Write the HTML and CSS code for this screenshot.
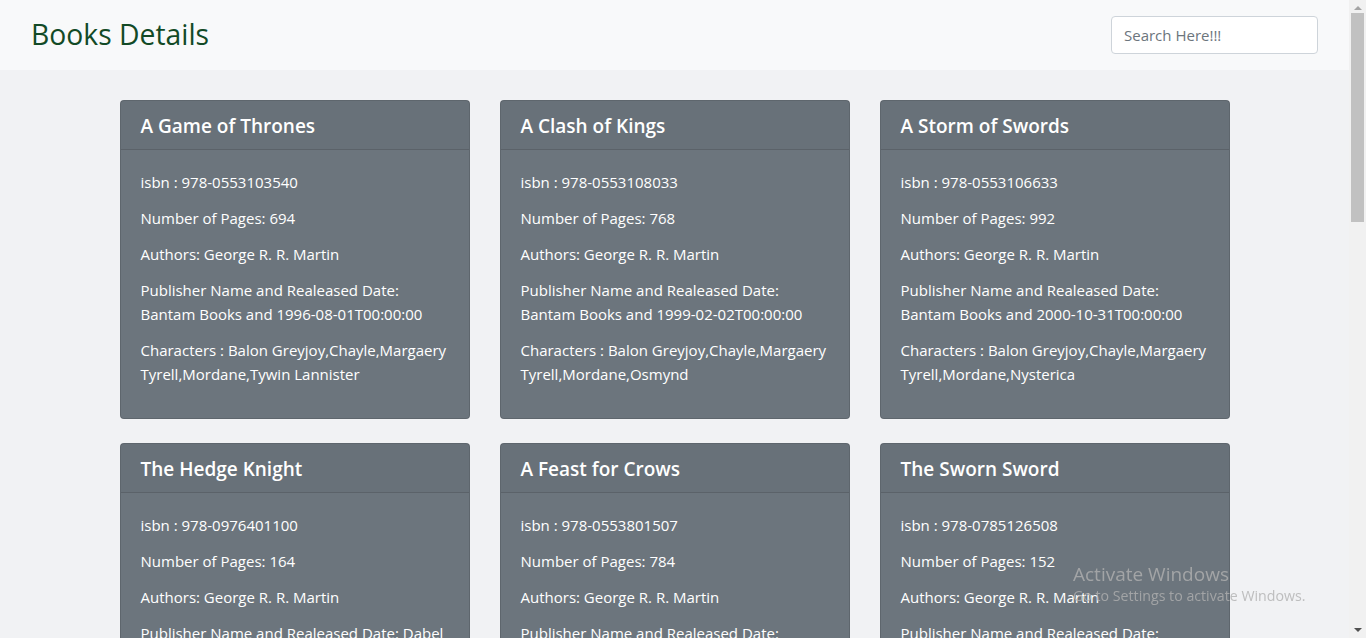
FILE: index.html
```html
<!DOCTYPE html>
<html lang="en">
<head>
<meta charset="utf-8">
<title>Books Details</title>
<link rel="stylesheet" href="styles.css">
</head>
<body>
<div class="app">
  <div class="page">
    <nav class="navbar">
      <h1 class="brand">Books Details</h1>
      <input class="search" type="text" placeholder="Search Here!!!">
    </nav>
    <main class="grid">
      <div class="card">
        <div class="card-header"><h5 class="card-title">A Game of Thrones</h5></div>
        <div class="card-body">
          <p>isbn : 978-0553103540</p>
          <p>Number of Pages: 694</p>
          <p>Authors: George R. R. Martin</p>
          <p>Publisher Name and Realeased Date: Bantam Books and 1996-08-01T00:00:00</p>
          <p>Characters : Balon Greyjoy,Chayle,Margaery Tyrell,Mordane,Tywin Lannister</p>
        </div>
      </div>
      <div class="card">
        <div class="card-header"><h5 class="card-title">A Clash of Kings</h5></div>
        <div class="card-body">
          <p>isbn : 978-0553108033</p>
          <p>Number of Pages: 768</p>
          <p>Authors: George R. R. Martin</p>
          <p>Publisher Name and Realeased Date: Bantam Books and 1999-02-02T00:00:00</p>
          <p>Characters : Balon Greyjoy,Chayle,Margaery Tyrell,Mordane,Osmynd</p>
        </div>
      </div>
      <div class="card">
        <div class="card-header"><h5 class="card-title">A Storm of Swords</h5></div>
        <div class="card-body">
          <p>isbn : 978-0553106633</p>
          <p>Number of Pages: 992</p>
          <p>Authors: George R. R. Martin</p>
          <p>Publisher Name and Realeased Date: Bantam Books and 2000-10-31T00:00:00</p>
          <p>Characters : Balon Greyjoy,Chayle,Margaery Tyrell,Mordane,Nysterica</p>
        </div>
      </div>
      <div class="card">
        <div class="card-header"><h5 class="card-title">The Hedge Knight</h5></div>
        <div class="card-body">
          <p>isbn : 978-0976401100</p>
          <p>Number of Pages: 164</p>
          <p>Authors: George R. R. Martin</p>
          <p>Publisher Name and Realeased Date: Dabel Brothers Publishing and 2005-10-03T00:00:00</p>
          <p>Characters : Aegon I Targaryen,Aerion Targaryen,Bennis,Duncan the Tall</p>
        </div>
      </div>
      <div class="card">
        <div class="card-header"><h5 class="card-title">A Feast for Crows</h5></div>
        <div class="card-body">
          <p>isbn : 978-0553801507</p>
          <p>Number of Pages: 784</p>
          <p>Authors: George R. R. Martin</p>
          <p>Publisher Name and Realeased Date: Bantam Books and 2005-11-08T00:00:00</p>
          <p>Characters : Aemon Targaryen,Alayaya,Alleras,Arya Stark</p>
        </div>
      </div>
      <div class="card">
        <div class="card-header"><h5 class="card-title">The Sworn Sword</h5></div>
        <div class="card-body">
          <p>isbn : 978-0785126508</p>
          <p>Number of Pages: 152</p>
          <p>Authors: George R. R. Martin</p>
          <p>Publisher Name and Realeased Date: Marvel and 2008-06-18T00:00:00</p>
          <p>Characters : Aegon Targaryen,Bennis,Duncan the Tall,Egg</p>
        </div>
      </div>
    </main>
  </div>
  <div class="scrollbar">
    <span class="arrow arrow-up"></span>
    <div class="thumb"></div>
    <div class="track"></div>
    <span class="arrow arrow-down"></span>
  </div>
</div>
<div class="watermark">
  <div class="wm-title">Activate Windows</div>
  <div class="wm-sub">Go to Settings to activate Windows.</div>
</div>
</body>
</html>
```

FILE: styles.css
```css
* { box-sizing: border-box; }

html, body {
  margin: 0;
  height: 100%;
  overflow: hidden;
}

body {
  font-family: "Open Sans", "Noto Sans", sans-serif;
  font-size: 15px;
  line-height: 24px;
  color: #212529;
  background: #f1f2f4;
}

.app {
  display: flex;
  height: 100vh;
}

.page {
  flex: 1;
  min-width: 0;
  overflow: hidden;
}

.navbar {
  height: 70px;
  background: #f8f9fa;
  display: flex;
  align-items: center;
  justify-content: space-between;
  padding: 0 31px;
}

.brand {
  margin: 0;
  font-size: 28.3px;
  font-weight: 400;
  line-height: 1.2;
  color: #124a26;
}

.search {
  width: 207px;
  height: 38px;
  padding: 6px 12px;
  border: 1px solid #ced4da;
  border-radius: 4px;
  background: #fff;
  font-family: inherit;
  font-size: 15px;
  color: #495057;
  outline: none;
}

.search::placeholder {
  color: #6c757d;
}

.grid {
  width: 1110px;
  margin: 30px auto 0;
  display: grid;
  grid-template-columns: repeat(3, 350px);
  column-gap: 30px;
  row-gap: 24px;
  align-items: start;
}

.card {
  background: #6c757d;
  border: 1px solid rgba(0, 0, 0, 0.125);
  border-radius: 4px;
  color: #fff;
}

.card-header {
  padding: 13px 20px 11px;
  border-bottom: 1px solid rgba(0, 0, 0, 0.125);
  background: rgba(0, 0, 0, 0.03);
}

.card-title {
  margin: 0;
  font-size: 19px;
  font-weight: 600;
  line-height: 24px;
}

.card-body {
  padding: 20px;
}

.card-body p {
  margin: 0 0 12px;
}

.scrollbar {
  width: 17px;
  flex: none;
  background: #f1f1f1;
  display: flex;
  flex-direction: column;
  align-items: center;
}

.arrow {
  width: 0;
  height: 0;
  border-left: 4px solid transparent;
  border-right: 4px solid transparent;
  margin: 6px 0 3px;
}

.arrow-up {
  border-bottom: 4px solid #a3a3a3;
}

.arrow-down {
  border-top: 4px solid #505050;
  margin: 3px 0 6px;
}

.thumb {
  width: 13px;
  height: 209px;
  background: #c1c1c1;
}

.track {
  flex: 1;
}

.watermark {
  position: fixed;
  left: 1073px;
  top: 561px;
  color: rgba(176, 176, 176, 0.8);
  font-family: "Open Sans", sans-serif;
  pointer-events: none;
}

.wm-title {
  font-size: 19px;
  line-height: 26px;
}

.wm-sub {
  font-size: 14.2px;
  line-height: 18px;
}
```
